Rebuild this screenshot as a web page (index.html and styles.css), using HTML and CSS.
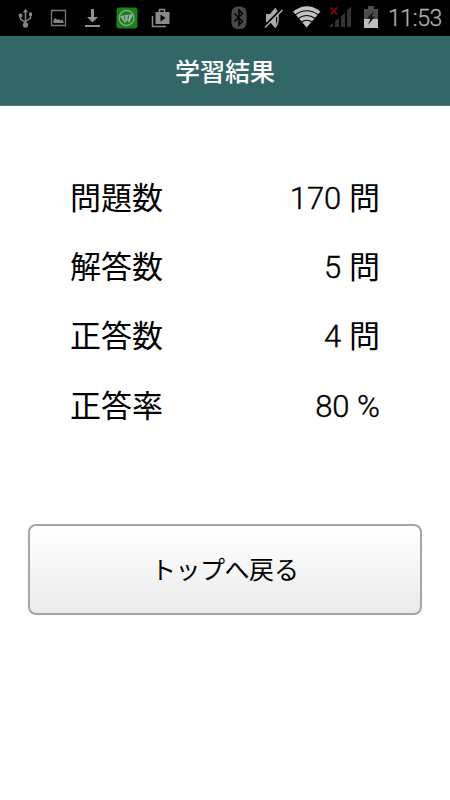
FILE: index.html
```html
<!DOCTYPE html>
<html lang="ja">
<head>
    <meta charset="UTF-8">
    <meta name="viewport" content="width=device-width, initial-scale=1">
    <title>学習結果</title>
    <link rel="stylesheet" href="styles.css">
</head>
<body>
    <!-- Status bar -->
    <div class="status-bar">
        <div class="notifications">
            <!-- usb -->
            <svg width="16" height="22" viewBox="0 0 16 22" fill="none" stroke="#858585" stroke-width="1.5">
                <path d="M7.5 4v14M2.500 9v3l5 3.500M12.500 8v3l-5 3.500"/>
                <path d="M7.500 1.500L10 5.500H5z" fill="#858585" stroke="none"/>
                <circle cx="7.500" cy="18" r="2.700" fill="#858585" stroke="none"/>
                <circle cx="2.500" cy="8.500" r="1.900" fill="#858585" stroke="none"/>
                <path d="M11 5.500h3v3.500h-3z" fill="#858585" stroke="none"/>
            </svg>
            <!-- picture -->
            <svg width="17" height="22" viewBox="0 0 17 22">
                <path d="M1.500 3.500h14v15h-14z" fill="none" stroke="#777" stroke-width="1.300"/>
                <path d="M3.500 16v-3l2-2 2 2 1-1 2 1.500 1-1 2 1.500v2z" fill="#858585"/>
            </svg>
            <!-- download -->
            <svg width="16" height="22" viewBox="0 0 16 22" fill="#909090">
                <path d="M7 2h3v8h4l-5.500 5.500L3 10h4zM1 18h15v2H1z"/>
            </svg>
            <!-- app -->
            <svg width="22" height="22" viewBox="0 0 22 22">
                <rect x=".5" y=".5" width="21" height="21" rx="3" fill="#188218"/>
                <circle cx="10.500" cy="11" r="7.500" fill="none" stroke="#8fa48f" stroke-width="1.300"/>
                <path d="M4 9l13.500-2L13 16l-1.500-3-2.500 3-3-4z" fill="#9aaa9a"/>
                <path d="M8.500 9l.5 4M12.500 8.500l-.5 4" stroke="#188218"/>
            </svg>
            <!-- store -->
            <svg width="20" height="22" viewBox="0 0 20 22">
                <path d="M1.500 9v10.500H15" fill="none" stroke="#8a8a8a" stroke-width="1.500"/>
                <path d="M8.500 5V2.500h5V5" fill="none" stroke="#8a8a8a" stroke-width="1.500"/>
                <path d="M4.500 5H18.500v12H4.500zM9.500 7.500v7l5-3.500z" fill="#8a8a8a" fill-rule="evenodd"/>
            </svg>
        </div>
        <div class="system">
            <!-- bluetooth -->
            <svg class="bluetooth" width="16" height="24" viewBox="0 0 16 24">
                <rect x=".5" y=".5" width="15" height="22.500" rx="6" fill="#484848"/>
                <path d="M3.500 7.500l8 8L8 19V4l3.500 3.500-8 8" fill="none" stroke="#000" stroke-width="1.500"/>
            </svg>
            <!-- mute -->
            <svg class="mute" width="20" height="24" viewBox="0 0 20 24">
                <path d="M2 8h4l5-6h1v20h-1l-5-6H2z" fill="#aaa"/>
                <path d="M11 3c4 3 4 15 0 18" fill="none" stroke="#999" stroke-width="1.800"/>
                <path d="M1 20L18 3" stroke="#000" stroke-width="2.500"/>
                <path d="M1 21.500L18.500 4" stroke="#b5b5b5" stroke-width="1.500"/>
            </svg>
            <!-- wifi -->
            <svg class="wifi" width="28" height="24" viewBox="0 0 28 24">
                <path d="M0 5.500Q14-5 27.500 5.500L13.700 21.500z" fill="#c2c2c2"/>
                <path d="M2 9q11.700-8.500 23.500 0M5 12.800q8.700-6.500 17.500 0M8 16.500q5.700-4.500 11.500 0" fill="none" stroke="#000" stroke-width="1.100"/>
            </svg>
            <!-- signal -->
            <svg class="signal" width="24" height="24" viewBox="0 0 24 24">
                <path d="M1 21v-1.500l3-2.500v4zM6 21v-6l4-3v9zM12 21v-10.500l4-4v14.500zM18 21V4.500l4-4V21z" fill="#333"/>
                <path d="M1.500 1.500l6.500 7M8 1.500l-6.500 7" stroke="#8c0505" stroke-width="1.800"/>
            </svg>
            <!-- battery -->
            <svg class="battery" width="16" height="24" viewBox="0 0 16 24">
                <path d="M1 3h4V0h6v3h4v10H1z" fill="#4d4d4d"/>
                <path d="M1 13h14v9H1z" fill="#bdbdbd"/>
                <path d="M11 5l-7 7.500h3.500L5 19l7-8.500H8.500z" fill="#111"/>
            </svg>
            <span class="clock">11:53</span>
        </div>
    </div>

    <div class="header">
        <h1>学習結果</h1>
    </div>

    <!-- Result -->
    <div class="container">
        <table class="results">
            <tr>
                <td>問題数</td>
                <td class="value"><span class="number">170</span> 問</td>
            </tr>
            <tr>
                <td>解答数</td>
                <td class="value"><span class="number">5</span> 問</td>
            </tr>
            <tr>
                <td>正答数</td>
                <td class="value"><span class="number">4</span> 問</td>
            </tr>
            <tr>
                <td>正答率</td>
                <td class="value"><span class="number">80 %</span></td>
            </tr>
        </table>

        <button class="back" type="button"><span class="kana">トップへ</span>戻る</button>
    </div>
</body>
</html>
```
FILE: styles.css
```css
* {
    box-sizing: border-box;
    margin: 0;
    padding: 0;
}

body {
    background: #fff;
    color: #000;
    font-family: Roboto, "Noto Sans CJK JP", sans-serif;
}

/* Status bar */
.status-bar {
    display: flex;
    justify-content: space-between;
    height: 36px;
    padding: 6px 8px 0 18px;
    background: #000;
}

.status-bar svg {
    display: block;
    flex: none;
}

.notifications {
    display: flex;
    gap: 16px;
    padding-top: 1px;
}

.notifications svg:nth-child(3) {
    margin-left: 1px;
}

.notifications svg:nth-child(5) {
    margin-left: -3px;
}

.system {
    display: flex;
}

.mute {
    margin-left: 17px;
}

.wifi {
    margin-left: 9px;
}

.signal {
    margin-left: 8px;
}

.battery {
    margin-left: 10px;
}

.clock {
    width: 54px;
    margin-left: 9px;
    color: #b0b0b0;
    font-size: 23px;
    font-weight: 300;
    line-height: 26px;
    letter-spacing: -0.4px;
    white-space: nowrap;
    -webkit-text-stroke: 0.3px #b0b0b0;
}

/* Title */
.header {
    height: 70px;
    background: #336666;
    border-bottom: 1px solid #4c7878;
    text-align: center;
}

.header h1 {
    color: #fff;
    font-size: 25px;
    font-weight: 500;
    line-height: 73px;
}

.container {
    padding: 58px 28px 0;
}

/* Result table */
.results {
    width: 310px;
    margin: 0 auto;
    border-collapse: collapse;
    font-size: 31px;
}

.results td {
    height: 69.3px;
    line-height: 46px;
    vertical-align: middle;
}

.results .value {
    text-align: right;
}

.number {
    font-weight: 300;
    -webkit-text-stroke: 0.4px #000;
}

/* Button */
.back {
    display: block;
    width: 394px;
    height: 91px;
    margin-top: 83px;
    padding-bottom: 4px;
    border: 2px solid #a5a5a5;
    border-radius: 8px;
    background: linear-gradient(#fff, #ebebeb);
    color: #000;
    font-family: inherit;
    font-size: 25px;
}

.kana {
    letter-spacing: -0.5px;
}
```
